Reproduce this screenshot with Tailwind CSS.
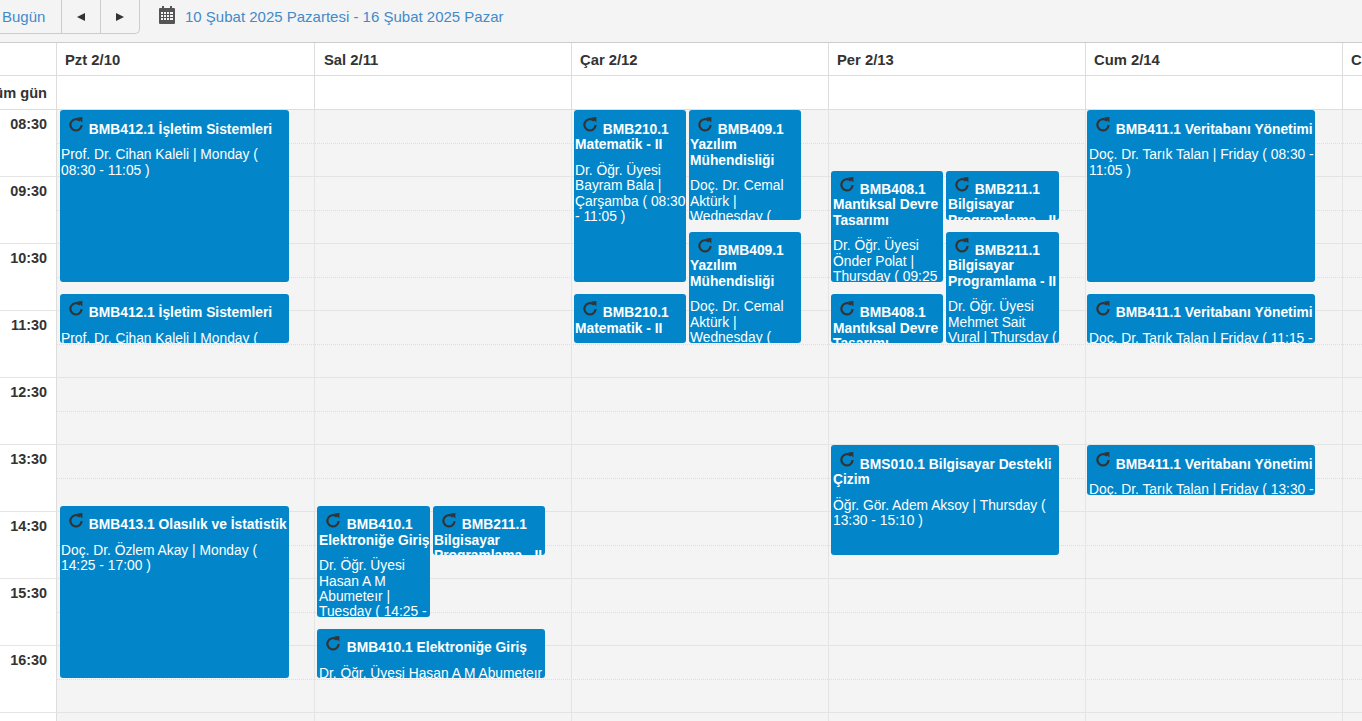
<!DOCTYPE html>
<html lang="tr">
  <head>
    <meta charset="UTF-8" />
    <title>Ders Programı</title>
    <script src="https://cdn.jsdelivr.net/npm/@tailwindcss/browser@4"></script>
  </head>
  <body class="h-[721px] w-[1362px] overflow-hidden bg-[#f4f4f4] font-['Liberation_Sans',Arial,sans-serif] text-[14px] text-[#333]">
    <svg class="hidden">
      <symbol id="repeat" viewBox="0 0 16 16">
        <path d="M11.9 4.8A5.6 5.6 0 1 0 13.6 9" fill="none" stroke="#333" stroke-width="2.2" />
        <path d="M9.2 1.6 14.4 1v5.4z" fill="#333" />
      </symbol>
    </svg>

    <!-- toolbar -->
    <div class="flex h-[42px] items-start">
      <div class="flex h-[34px] w-[140px] rounded-br-[5px] border-r border-b border-[#ccc]">
        <div class="w-[62px] border-r border-[#ccc] pl-[2px] pt-[6px] text-[15px] text-[#428bca]">Bugün</div>
        <div class="flex w-[39px] items-center justify-center border-r border-[#ccc]">
          <div class="h-0 w-0 border-y-[4px] border-r-[8px] border-y-transparent border-r-[#333]"></div>
        </div>
        <div class="flex flex-1 items-center justify-center">
          <div class="h-0 w-0 border-y-[4px] border-l-[8px] border-y-transparent border-l-[#333]"></div>
        </div>
      </div>
      <svg class="ml-[19px] mt-[6px] h-[18px] w-[16px]" viewBox="0 0 16 18">
        <path fill="#555" fill-rule="evenodd" d="M1 2h2V0h2v2h6V0h2v2h2a1 1 0 0 1 1 1v14a1 1 0 0 1-1 1H1a1 1 0 0 1-1-1V3a1 1 0 0 1 1-1zM2 6v2h2V6zm3 0v2h2V6zm3 0v2h2V6zm3 0v2h3V6zM2 9v2h2V9zm3 0v2h2V9zm3 0v2h2V9zm3 0v2h3V9zM2 12v2h2v-2zm3 0v2h2v-2zm3 0v2h2v-2zm3 0v2h3v-2z" />
      </svg>
      <div class="ml-[10px] pt-[6px] text-[15px] text-[#428bca]">10 Şubat 2025 Pazartesi - 16 Şubat 2025 Pazar</div>
    </div>

    <div class="border-t border-[#ccc]">
      <!-- day headers -->
      <div class="flex h-[33px] border-b border-[#ddd] bg-white text-[14.8px] font-bold">
        <div class="w-[57px] shrink-0 border-r border-[#ddd]"></div>
        <div class="w-[258px] shrink-0 border-r border-[#ddd] pl-[8px] pt-[6px]">Pzt 2/10</div>
        <div class="w-[257px] shrink-0 border-r border-[#ddd] pl-[9px] pt-[6px]">Sal 2/11</div>
        <div class="w-[257px] shrink-0 border-r border-[#ddd] pl-[8px] pt-[6px]">Çar 2/12</div>
        <div class="w-[257px] shrink-0 border-r border-[#ddd] pl-[8px] pt-[6px]">Per 2/13</div>
        <div class="w-[257px] shrink-0 border-r border-[#ddd] pl-[8px] pt-[6px]">Cum 2/14</div>
        <div class="shrink-0 pl-[8px] pt-[6px]">Cmt 2/15</div>
      </div>

      <!-- all day row -->
      <div class="flex h-[34px] border-b border-[#ddd] bg-white">
        <div class="w-[57px] shrink-0 overflow-hidden whitespace-nowrap border-r border-[#ddd] pr-[9px] pt-[7px] text-right text-[14.6px] font-bold"><div class="float-right">Tüm gün</div></div>
        <div class="w-[258px] shrink-0 border-r border-[#ddd]"></div>
        <div class="w-[257px] shrink-0 border-r border-[#ddd]"></div>
        <div class="w-[257px] shrink-0 border-r border-[#ddd]"></div>
        <div class="w-[257px] shrink-0 border-r border-[#ddd]"></div>
        <div class="w-[257px] shrink-0 border-r border-[#ddd]"></div>
      </div>

      <!-- time grid -->
      <div class="relative">
        <div class="flex h-[67px] border-b border-[#e4e4e4]"><div class="w-[57px] shrink-0 border-r border-[#ddd] bg-white pr-[9px] pt-[4px] text-right text-[14.4px] font-bold">08:30</div><div class="mt-[33px] h-px flex-1 border-b border-dotted border-[#ddd]"></div></div>
        <div class="flex h-[67px] border-b border-[#e4e4e4]"><div class="w-[57px] shrink-0 border-r border-[#ddd] bg-white pr-[9px] pt-[4px] text-right text-[14.4px] font-bold">09:30</div><div class="mt-[33px] h-px flex-1 border-b border-dotted border-[#ddd]"></div></div>
        <div class="flex h-[67px] border-b border-[#e4e4e4]"><div class="w-[57px] shrink-0 border-r border-[#ddd] bg-white pr-[9px] pt-[4px] text-right text-[14.4px] font-bold">10:30</div><div class="mt-[33px] h-px flex-1 border-b border-dotted border-[#ddd]"></div></div>
        <div class="flex h-[67px] border-b border-[#e4e4e4]"><div class="w-[57px] shrink-0 border-r border-[#ddd] bg-white pr-[9px] pt-[4px] text-right text-[14.4px] font-bold">11:30</div><div class="mt-[33px] h-px flex-1 border-b border-dotted border-[#ddd]"></div></div>
        <div class="flex h-[67px] border-b border-[#e4e4e4]"><div class="w-[57px] shrink-0 border-r border-[#ddd] bg-white pr-[9px] pt-[4px] text-right text-[14.4px] font-bold">12:30</div><div class="mt-[33px] h-px flex-1 border-b border-dotted border-[#ddd]"></div></div>
        <div class="flex h-[67px] border-b border-[#e4e4e4]"><div class="w-[57px] shrink-0 border-r border-[#ddd] bg-white pr-[9px] pt-[4px] text-right text-[14.4px] font-bold">13:30</div><div class="mt-[33px] h-px flex-1 border-b border-dotted border-[#ddd]"></div></div>
        <div class="flex h-[67px] border-b border-[#e4e4e4]"><div class="w-[57px] shrink-0 border-r border-[#ddd] bg-white pr-[9px] pt-[4px] text-right text-[14.4px] font-bold">14:30</div><div class="mt-[33px] h-px flex-1 border-b border-dotted border-[#ddd]"></div></div>
        <div class="flex h-[67px] border-b border-[#e4e4e4]"><div class="w-[57px] shrink-0 border-r border-[#ddd] bg-white pr-[9px] pt-[4px] text-right text-[14.4px] font-bold">15:30</div><div class="mt-[33px] h-px flex-1 border-b border-dotted border-[#ddd]"></div></div>
        <div class="flex h-[67px] border-b border-[#e4e4e4]"><div class="w-[57px] shrink-0 border-r border-[#ddd] bg-white pr-[9px] pt-[4px] text-right text-[14.4px] font-bold">16:30</div><div class="mt-[33px] h-px flex-1 border-b border-dotted border-[#ddd]"></div></div>
        <div class="flex h-[8px]"><div class="w-[57px] shrink-0 border-r border-[#ddd] bg-white"></div></div>

        <!-- day column lines and events -->
        <div class="absolute inset-y-0 left-[57px] flex text-[13.8px] text-white">
          <div class="relative w-[258px] border-r border-[#e4e4e4]">
            <div class="absolute left-[3px] top-0 h-[172px] w-[229px] overflow-hidden rounded-[3px] bg-[#0286c9] px-px">
              <div class="pt-[12px] font-bold leading-[15.4px]"><svg class="relative -top-[6px] -my-2 ml-[7px] mr-px inline-block h-4 w-4"><use href="#repeat" /></svg> BMB412.1 İşletim Sistemleri</div>
              <div class="mt-[10px] leading-[15.4px]">Prof. Dr. Cihan Kaleli | Monday ( 08:30 - 11:05 )</div>
            </div>
            <div class="absolute left-[3px] top-[184px] h-[49px] w-[229px] overflow-hidden rounded-[3px] bg-[#0286c9] px-px">
              <div class="pt-[11.3px] font-bold leading-[15.4px]"><svg class="relative -top-[6px] -my-2 ml-[7px] mr-px inline-block h-4 w-4"><use href="#repeat" /></svg> BMB412.1 İşletim Sistemleri</div>
              <div class="mt-[10px] leading-[15.4px]">Prof. Dr. Cihan Kaleli | Monday ( 11:15 - 12:00 )</div>
            </div>
            <div class="absolute left-[3px] top-[396px] h-[172px] w-[229px] overflow-hidden rounded-[3px] bg-[#0286c9] px-px">
              <div class="pt-[11.3px] font-bold leading-[15.4px]"><svg class="relative -top-[6px] -my-2 ml-[7px] mr-px inline-block h-4 w-4"><use href="#repeat" /></svg> BMB413.1 Olasılık ve İstatistik</div>
              <div class="mt-[10px] leading-[15.4px]">Doç. Dr. Özlem Akay | Monday ( 14:25 - 17:00 )</div>
            </div>
          </div>
          <div class="relative w-[257px] border-r border-[#e4e4e4]">
            <div class="absolute left-[2px] top-[396px] h-[111px] w-[113px] overflow-hidden rounded-[3px] bg-[#0286c9] pl-[2px]">
              <div class="pt-[11.3px] font-bold leading-[15.4px]"><svg class="relative -top-[6px] -my-2 ml-[6px] mr-[2px] inline-block h-4 w-4"><use href="#repeat" /></svg> BMB410.1 Elektroniğe Giriş</div>
              <div class="mt-[10px] leading-[15.4px]">Dr. Öğr. Üyesi Hasan A M Abumeteır | Tuesday ( 14:25 - 16:00 )</div>
            </div>
            <div class="absolute left-[118px] top-[396px] h-[49px] w-[112px] overflow-hidden rounded-[3px] bg-[#0286c9] px-px">
              <div class="pt-[11.3px] font-bold leading-[15.4px]"><svg class="relative -top-[6px] -my-2 ml-[7px] mr-px inline-block h-4 w-4"><use href="#repeat" /></svg> BMB211.1 Bilgisayar Programlama - II</div>
            </div>
            <div class="absolute left-[2px] top-[519px] h-[49px] w-[228px] overflow-hidden rounded-[3px] bg-[#0286c9] pl-[2px]">
              <div class="pt-[11.3px] font-bold leading-[15.4px]"><svg class="relative -top-[6px] -my-2 ml-[6px] mr-[2px] inline-block h-4 w-4"><use href="#repeat" /></svg> BMB410.1 Elektroniğe Giriş</div>
              <div class="mt-[10px] leading-[15.4px]">Dr. Öğr. Üyesi Hasan A M Abumeteır | Tuesday ( 16:10 - 17:00 )</div>
            </div>
          </div>
          <div class="relative w-[257px] border-r border-[#e4e4e4]">
            <div class="absolute left-[2px] top-0 h-[172px] w-[112px] overflow-hidden rounded-[3px] bg-[#0286c9] px-px">
              <div class="pt-[12px] font-bold leading-[15.4px]"><svg class="relative -top-[6px] -my-2 ml-[7px] mr-px inline-block h-4 w-4"><use href="#repeat" /></svg> BMB210.1 Matematik - II</div>
              <div class="-mr-[4px] mt-[10px] leading-[15.4px]">Dr. Öğr. Üyesi Bayram Bala | Çarşamba ( 08:30 - 11:05 )</div>
            </div>
            <div class="absolute left-[117px] top-0 h-[110px] w-[112px] overflow-hidden rounded-[3px] bg-[#0286c9] px-px">
              <div class="pt-[12px] font-bold leading-[15.4px]"><svg class="relative -top-[6px] -my-2 ml-[7px] mr-px inline-block h-4 w-4"><use href="#repeat" /></svg> BMB409.1 Yazılım Mühendisliği</div>
              <div class="mt-[10px] leading-[15.4px]">Doç. Dr. Cemal Aktürk | Wednesday ( 08:30 - 10:00 )</div>
            </div>
            <div class="absolute left-[117px] top-[122px] h-[111px] w-[112px] overflow-hidden rounded-[3px] bg-[#0286c9] px-px">
              <div class="pt-[11px] font-bold leading-[15.4px]"><svg class="relative -top-[6px] -my-2 ml-[7px] mr-px inline-block h-4 w-4"><use href="#repeat" /></svg> BMB409.1 Yazılım Mühendisliği</div>
              <div class="mt-[10px] leading-[15.4px]">Doç. Dr. Cemal Aktürk | Wednesday ( 10:20 - 12:00 )</div>
            </div>
            <div class="absolute left-[2px] top-[184px] h-[49px] w-[112px] overflow-hidden rounded-[3px] bg-[#0286c9] px-px">
              <div class="pt-[11.3px] font-bold leading-[15.4px]"><svg class="relative -top-[6px] -my-2 ml-[7px] mr-px inline-block h-4 w-4"><use href="#repeat" /></svg> BMB210.1 Matematik - II</div>
            </div>
          </div>
          <div class="relative w-[257px] border-r border-[#e4e4e4]">
            <div class="absolute left-[2px] top-[61px] h-[111px] w-[112px] overflow-hidden rounded-[3px] bg-[#0286c9] pl-[2px]">
              <div class="pt-[11px] font-bold leading-[15.4px]"><svg class="relative -top-[6px] -my-2 ml-[6px] mr-px inline-block h-4 w-4"><use href="#repeat" /></svg> BMB408.1 Mantıksal Devre Tasarımı</div>
              <div class="mt-[10px] leading-[15.4px]">Dr. Öğr. Üyesi Önder Polat | Thursday ( 09:25 - 11:05 )</div>
            </div>
            <div class="absolute left-[117px] top-[61px] h-[49px] w-[113px] overflow-hidden rounded-[3px] bg-[#0286c9] pl-[2px]">
              <div class="pt-[11px] font-bold leading-[15.4px]"><svg class="relative -top-[6px] -my-2 ml-[6px] mr-px inline-block h-4 w-4"><use href="#repeat" /></svg> BMB211.1 Bilgisayar Programlama - II</div>
            </div>
            <div class="absolute left-[117px] top-[122px] h-[111px] w-[113px] overflow-hidden rounded-[3px] bg-[#0286c9] pl-[2px]">
              <div class="pt-[11px] font-bold leading-[15.4px]"><svg class="relative -top-[6px] -my-2 ml-[6px] mr-px inline-block h-4 w-4"><use href="#repeat" /></svg> BMB211.1 Bilgisayar Programlama - II</div>
              <div class="mt-[10px] leading-[15.4px]">Dr. Öğr. Üyesi Mehmet Sait Vural | Thursday ( 10:20 - 12:00 )</div>
            </div>
            <div class="absolute left-[2px] top-[184px] h-[49px] w-[112px] overflow-hidden rounded-[3px] bg-[#0286c9] pl-[2px]">
              <div class="pt-[11.3px] font-bold leading-[15.4px]"><svg class="relative -top-[6px] -my-2 ml-[6px] mr-px inline-block h-4 w-4"><use href="#repeat" /></svg> BMB408.1 Mantıksal Devre Tasarımı</div>
            </div>
            <div class="absolute left-[2px] top-[335px] h-[110px] w-[228px] overflow-hidden rounded-[3px] bg-[#0286c9] pl-[2px]">
              <div class="pt-[12px] font-bold leading-[15.4px]"><svg class="relative -top-[6px] -my-2 ml-[6px] mr-px inline-block h-4 w-4"><use href="#repeat" /></svg> BMS010.1 Bilgisayar Destekli Çizim</div>
              <div class="mt-[10px] leading-[15.4px]">Öğr. Gör. Adem Aksoy | Thursday ( 13:30 - 15:10 )</div>
            </div>
          </div>
          <div class="relative w-[257px] border-r border-[#e4e4e4]">
            <div class="absolute left-[1px] top-0 h-[172px] w-[228px] overflow-hidden rounded-[3px] bg-[#0286c9] pl-[2px]">
              <div class="pt-[12px] font-bold leading-[15.4px]"><svg class="relative -top-[6px] -my-2 ml-[6px] mr-px inline-block h-4 w-4"><use href="#repeat" /></svg> BMB411.1 Veritabanı Yönetimi</div>
              <div class="mt-[10px] leading-[15.4px]">Doç. Dr. Tarık Talan | Friday ( 08:30 - 11:05 )</div>
            </div>
            <div class="absolute left-[1px] top-[184px] h-[49px] w-[228px] overflow-hidden rounded-[3px] bg-[#0286c9] pl-[2px]">
              <div class="pt-[11.3px] font-bold leading-[15.4px]"><svg class="relative -top-[6px] -my-2 ml-[6px] mr-px inline-block h-4 w-4"><use href="#repeat" /></svg> BMB411.1 Veritabanı Yönetimi</div>
              <div class="mt-[10px] leading-[15.4px]">Doç. Dr. Tarık Talan | Friday ( 11:15 - 12:00 )</div>
            </div>
            <div class="absolute left-[1px] top-[335px] h-[50px] w-[228px] overflow-hidden rounded-[3px] bg-[#0286c9] pl-[2px]">
              <div class="pt-[12px] font-bold leading-[15.4px]"><svg class="relative -top-[6px] -my-2 ml-[6px] mr-px inline-block h-4 w-4"><use href="#repeat" /></svg> BMB411.1 Veritabanı Yönetimi</div>
              <div class="mt-[10px] leading-[15.4px]">Doç. Dr. Tarık Talan | Friday ( 13:30 - 14:15 )</div>
            </div>
          </div>
          <div class="w-[20px]"></div>
        </div>
      </div>
    </div>
  </body>
</html>
